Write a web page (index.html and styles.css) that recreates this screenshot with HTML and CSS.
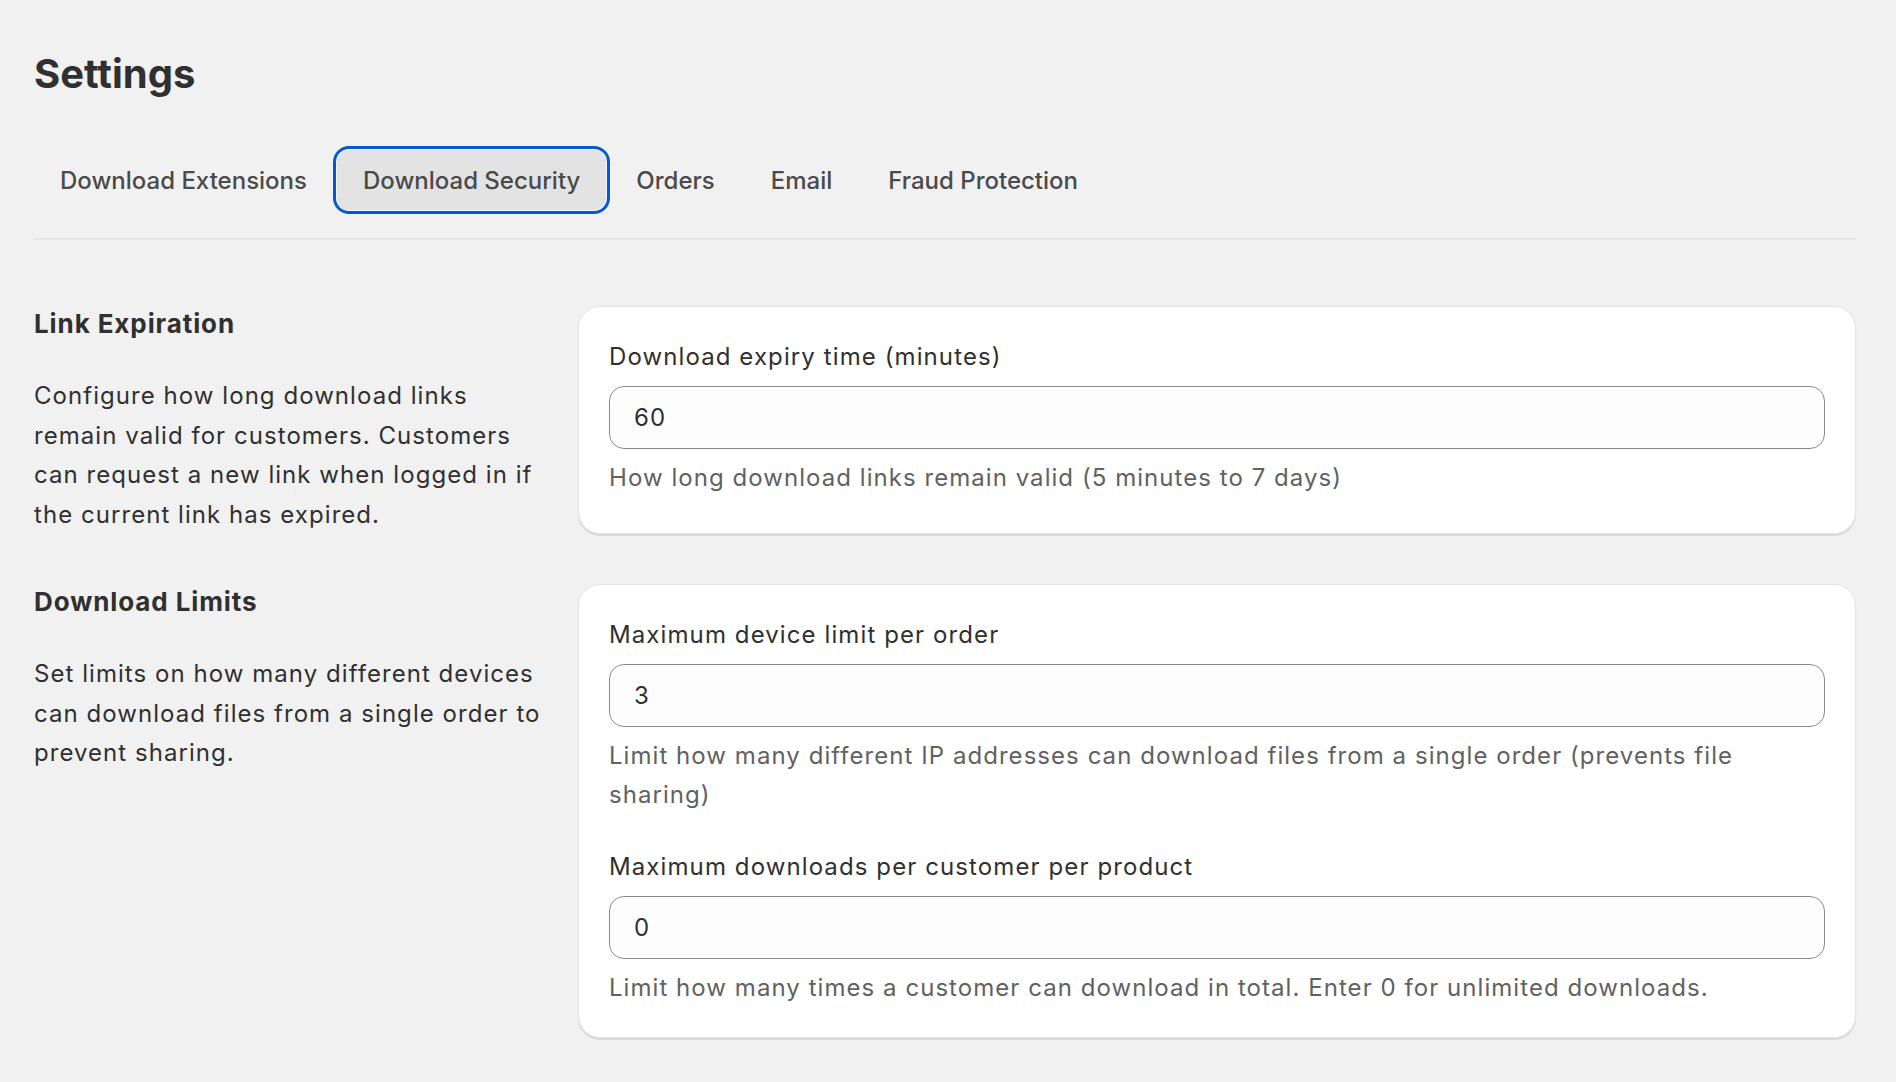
FILE: index.html
```html
<!DOCTYPE html>
<html lang="en">
  <head>
    <meta charset="UTF-8" />
    <meta name="viewport" content="width=device-width, initial-scale=1.0" />
    <title>Settings</title>
    <link rel="stylesheet" href="styles.css">
  </head>
  <body>
    <div class="page">
      <h1 class="page-title">Settings</h1>

      <nav class="tabs">
        <button class="tab">Download Extensions</button>
        <button class="tab tab-active">Download Security</button>
        <button class="tab">Orders</button>
        <button class="tab">Email</button>
        <button class="tab">Fraud Protection</button>
      </nav>

      <div class="layout">
        <div class="section-info">
          <h2>Link Expiration</h2>
          <p>
            Configure how long download links remain valid for customers.
            Customers can request a new link when logged in if the current link
            has expired.
          </p>
        </div>
        <div class="card">
          <div class="field">
            <label for="expiry">Download expiry time (minutes)</label>
            <input type="text" id="expiry" value="60" />
            <p class="help">How long download links remain valid (5 minutes to 7 days)</p>
          </div>
        </div>

        <div class="section-info">
          <h2>Download Limits</h2>
          <p>
            Set limits on how many different devices can download files from a
            single order to prevent sharing.
          </p>
        </div>
        <div class="card">
          <div class="field">
            <label for="devices">Maximum device limit per order</label>
            <input type="text" id="devices" value="3" />
            <p class="help">
              Limit how many different IP addresses can download files from a
              single order (prevents file sharing)
            </p>
          </div>
          <div class="field">
            <label for="downloads">Maximum downloads per customer per product</label>
            <input type="text" id="downloads" value="0" />
            <p class="help">
              Limit how many times a customer can download in total. Enter 0 for
              unlimited downloads.
            </p>
          </div>
        </div>
      </div>
    </div>
  </body>
</html>
```

FILE: styles.css
```css
body {
  font-family: Inter, "Noto Sans", sans-serif;
  background-color: #f1f1f1;
  color: #303030;
  margin: 0;
}

.page {
  padding: 50px 40px 40px 34px;
}

.page-title {
  margin: 0;
  font-size: 40px;
  line-height: 48px;
  font-weight: 700;
  color: #303030;
}

.tabs {
  display: flex;
  gap: 4px;
  margin-top: 52px;
  padding-bottom: 28px;
  border-bottom: 2px solid #e6e6e6;
}

.tab {
  height: 60px;
  padding: 0 26px;
  border: none;
  border-radius: 12px;
  background: transparent;
  font-family: inherit;
  font-size: 24px;
  font-weight: 500;
  color: #4a4a4a;
  cursor: pointer;
}

.tab:hover {
  background-color: #e8e8e8;
}

.tab-active {
  background-color: #e3e3e3;
  box-shadow: 0 0 0 1px #f7f7f7, 0 0 0 4px #005bd3;
}

.layout {
  display: grid;
  grid-template-columns: 512px 1fr;
  column-gap: 32px;
  row-gap: 50px;
  margin-top: 66px;
}

.section-info h2 {
  margin: 0;
  font-size: 26px;
  line-height: 36px;
  font-weight: 650;
  letter-spacing: 0.9px;
}

.section-info p {
  margin: 34px 0 0;
  font-size: 24px;
  line-height: 39.5px;
  letter-spacing: 1.05px;
}

.card {
  background-color: #fff;
  border: 1px solid #e4e4e4;
  border-radius: 22px;
  padding: 30px;
  box-shadow: 0 2px 1px rgba(0, 0, 0, 0.1);
}

.field + .field {
  margin-top: 33px;
}

.field label {
  display: block;
  font-size: 24px;
  line-height: 40px;
  letter-spacing: 1.1px;
}

.field input {
  display: block;
  box-sizing: border-box;
  width: 100%;
  height: 63px;
  margin-top: 9px;
  padding: 0 24px;
  border: 1px solid #8a8a8a;
  border-radius: 15px;
  background-color: #fdfdfd;
  font-family: inherit;
  font-size: 24px;
  letter-spacing: 1px;
  color: #303030;
}

.help {
  margin: 9px 0 0;
  font-size: 24px;
  line-height: 39px;
  letter-spacing: 1.05px;
  color: #616161;
}
```
